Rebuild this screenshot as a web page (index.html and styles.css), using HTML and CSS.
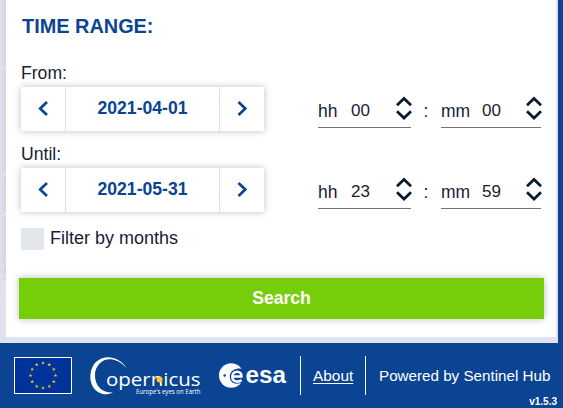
FILE: index.html
```html
<!DOCTYPE html>
<html lang="en">
<head>
<meta charset="utf-8">
<title>Time range search</title>
<link rel="stylesheet" href="styles.css">
</head>
<body>
<div class="sidebar">
  <main class="map-edge">
    <svg class="map-lines" width="6" height="343" viewBox="0 0 6 343"><path d="M0 70L6 66M0 179L6 174M0 217L6 213M0 268L6 263M0 278L6 276M0 300Q3 301 6 304"/></svg>
    <form class="panel">
      <h1 class="title">TIME RANGE:</h1>
      <label class="label">From:</label>
      <div class="row">
        <div class="date-picker">
          <button class="step" type="button"><svg width="12" height="16" viewBox="0 0 12 16"><path d="M10 1L3.200 7.500L10 14"/></svg></button>
          <span class="date">2021-04-01</span>
          <button class="step" type="button"><svg width="12" height="16" viewBox="0 0 12 16"><path d="M2.500 1L9.300 7.500L2.500 14"/></svg></button>
        </div>
        <div class="time">
          <div class="field hours"><span class="unit">hh</span><span class="value">00</span><svg class="spin" width="18" height="24" viewBox="0 0 18 24"><path d="M2 9.300L9 2.500L16 9.300M2 15.200L9 22L16 15.200"/></svg></div>
          <span class="colon">:</span>
          <div class="field minutes"><span class="unit">mm</span><span class="value">00</span><svg class="spin" width="18" height="24" viewBox="0 0 18 24"><path d="M2 9.300L9 2.500L16 9.300M2 15.200L9 22L16 15.200"/></svg></div>
        </div>
      </div>
      <label class="label until">Until:</label>
      <div class="row">
        <div class="date-picker">
          <button class="step" type="button"><svg width="12" height="16" viewBox="0 0 12 16"><path d="M10 1L3.200 7.500L10 14"/></svg></button>
          <span class="date">2021-05-31</span>
          <button class="step" type="button"><svg width="12" height="16" viewBox="0 0 12 16"><path d="M2.500 1L9.300 7.500L2.500 14"/></svg></button>
        </div>
        <div class="time">
          <div class="field hours"><span class="unit">hh</span><span class="value">23</span><svg class="spin" width="18" height="24" viewBox="0 0 18 24"><path d="M2 9.300L9 2.500L16 9.300M2 15.200L9 22L16 15.200"/></svg></div>
          <span class="colon">:</span>
          <div class="field minutes"><span class="unit">mm</span><span class="value">59</span><svg class="spin" width="18" height="24" viewBox="0 0 18 24"><path d="M2 9.300L9 2.500L16 9.300M2 15.200L9 22L16 15.200"/></svg></div>
        </div>
      </div>
      <div class="filter"><span class="checkbox"></span><span>Filter by months</span></div>
      <button class="search" type="button">Search</button>
    </form>
  </main>
  <footer class="footer">
    <svg class="eu" width="58" height="37" viewBox="0 0 58 37">
      <defs><path id="star" d="M0-2L.5-.6H1.9L.8.2L1.2 1.6L0 .8L-1.2 1.6L-.8.2L-1.9-.6H-.5Z"/></defs>
      <rect x=".5" y=".5" width="57" height="36" fill="#039" stroke="#fff"/>
      <g fill="#e8cc20"><use href="#star" x="29" y="6"/><use href="#star" x="35.3" y="7.7"/><use href="#star" x="39.8" y="12.3"/><use href="#star" x="41.5" y="18.5"/><use href="#star" x="39.8" y="24.7"/><use href="#star" x="35.3" y="29.3"/><use href="#star" x="29" y="31"/><use href="#star" x="22.7" y="29.3"/><use href="#star" x="18.2" y="24.7"/><use href="#star" x="16.5" y="18.5"/><use href="#star" x="18.2" y="12.3"/><use href="#star" x="22.7" y="7.7"/></g>
    </svg>
    <svg class="copernicus" width="112" height="42" viewBox="0 0 112 42">
      <path fill="#fff" d="M36.5 13C29 1 14-1 6 7C-2 15-1.500 31 8 37C13 40 18 40 23 37.500C12 38 4.500 31 5 19C6 5 22-3 36.500 13Z"/>
      <text class="copernicus-name" x="16" y="31" textLength="94.5" lengthAdjust="spacingAndGlyphs">opernicus</text>
      <circle cx="69.5" cy="24.5" r="3" fill="#fbc81e"/>
      <text class="copernicus-tag" x="46" y="39.3" textLength="64.5" lengthAdjust="spacingAndGlyphs">Europe’s eyes on Earth</text>
    </svg>
    <svg class="esa" width="69" height="26" viewBox="0 0 69 26">
      <circle cx="12.2" cy="12.5" r="12.2" fill="#fff"/>
      <path fill="#0a4493" d="M25 6.2C19 4.3 10.8 6.5 10.8 13.5C10.8 20 17 22.5 22.4 19.4L25 16Z"/>
      <path fill="none" stroke="#fff" stroke-width="2.5" d="M13.8 13.6H22.5C23 7 13.3 7.2 13.3 13.6C13.3 19 19 19.8 22.5 17"/>
      <circle cx="5.7" cy="12.5" r="1.3" fill="#0a4493"/>
      <text class="esa-name" x="26.5" y="19.6" textLength="40.5" lengthAdjust="spacingAndGlyphs">esa</text>
    </svg>
    <a class="about">About</a>
    <span class="powered">Powered by Sentinel Hub</span>
    <span class="version">v1.5.3</span>
  </footer>
</div>
</body>
</html>
```
FILE: styles.css
```css
* { box-sizing: border-box; }
body {
  margin: 0;
  height: 408px;
  overflow: hidden;
  background: #0a4493;
  color: #162233;
  font: 17.6px/20px "Liberation Sans", Arial, sans-serif;
}
.sidebar { width: 563px; }
.map-edge {
  display: flex;
  width: 558px;
  height: 343px;
  background: #e0e3ef;
}
.map-lines {
  flex: none;
  background: linear-gradient(90deg, #dfe1ef, #d2d4e2) top / 6px 280px no-repeat;
  fill: none;
  stroke: #e6e9d2;
  stroke-width: 1.5;
}
.panel {
  width: 550px;
  height: 337px;
  padding: 15px 13px 0;
  background: #fff;
}
.title {
  margin: 0 0 0 3px;
  height: 48px;
  color: #0a4493;
  font-size: 19.9px;
  line-height: 22px;
}
.label { display: block; height: 24px; margin-left: 2px; }
.until { margin-top: 13px; }
.row { display: flex; height: 44px; margin-left: 2px; }
.date-picker {
  display: grid;
  grid-template-columns: 44px 155px 44px;
  width: 243px;
  height: 44px;
  background: #fff;
  box-shadow: 0 0 7px rgba(0, 0, 0, .25);
}
.step {
  display: grid;
  place-items: center;
  padding: 0;
  border: 0;
  background: none;
}
.step svg { fill: none; stroke: #0a4493; stroke-width: 2.7; }
.date {
  border: solid #dedede;
  border-width: 0 1px;
  color: #0a4493;
  font-weight: bold;
  line-height: 43px;
  text-align: center;
}
.time { display: flex; margin: 7px 0 0 54px; height: 34px; }
.field {
  display: flex;
  height: 34px;
  border-bottom: 1px solid #74717f;
  line-height: 34px;
}
.hours { width: 93px; }
.minutes { width: 100px; }
.unit { width: 33px; font-size: 17.5px; }
.minutes .unit { width: 41px; }
.value { font-size: 17px; line-height: 33px; }
.spin {
  margin: 2px -2px 0 auto;
  fill: none;
  stroke: #071a2e;
  stroke-width: 2.7;
}
.colon { width: 30px; line-height: 35px; text-align: center; }
.filter { display: flex; gap: 6px; margin: 16px 0 0 2px; height: 50px; font-size: 18px; }
.checkbox { width: 23px; height: 22px; background: #e3e7ec; }
.search {
  display: block;
  width: 525px;
  height: 41px;
  padding: 0 0 2px;
  border: 0;
  background: #76ce0a;
  box-shadow: 0 0 7px rgba(0, 0, 0, .28);
  color: #fff;
  font: bold 17.6px/38px "Liberation Sans", Arial, sans-serif;
}
.footer {
  display: flex;
  position: relative;
  height: 65px;
  padding: 13px 0 0 14px;
  color: #fff;
  font-size: 15.4px;
}
.eu { margin-top: 1px; }
.copernicus { margin: -1px 0 0 18px; overflow: visible; }
.copernicus-name { fill: #fff; font: 19px "Open Sans", sans-serif; }
.copernicus-tag { fill: #fff; font: 7px "Open Sans", sans-serif; }
.esa { margin: 7px 0 0 17px; overflow: visible; }
.esa-name { fill: #fff; font: bold 23px "Liberation Sans", sans-serif; }
.about, .powered { height: 39px; border-left: 1px solid #fff; line-height: 40px; white-space: nowrap; }
.about { width: 65px; margin-left: 12px; padding-left: 12px; text-decoration: underline; text-underline-offset: 2px; }
.powered { padding-left: 13px; font-size: 15.2px; }
.version { position: absolute; right: 6px; bottom: -1px; font-size: 10px; font-weight: bold; line-height: 14px; }
```
